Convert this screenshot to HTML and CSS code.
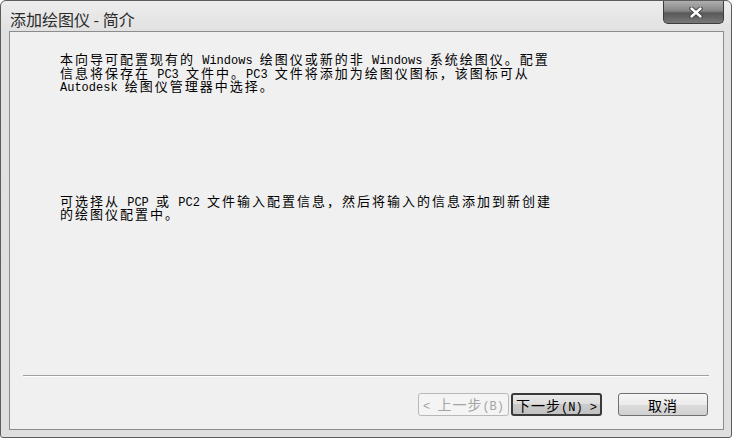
FILE: index.html
```html
<!DOCTYPE html>
<html lang="zh-CN">
<head>
    <meta charset="UTF-8">
    <title>添加绘图仪 - 简介</title>
    <link rel="stylesheet" href="styles.css">
</head>
<body>
    <div class="window">
        <div class="titlebar">
            <span class="title">添加绘图仪 - 简介</span>
            <button class="close" aria-label="关闭">
                <svg width="14" height="11" viewBox="0 0 14 11">
                    <path d="M2.5 1.5 L11.5 9.5 M11.5 1.5 L2.5 9.5" stroke="#3a3a3a" stroke-width="4.2" stroke-linecap="round"/>
                    <path d="M2.5 1.5 L11.5 9.5 M11.5 1.5 L2.5 9.5" stroke="#fff" stroke-width="2.4" stroke-linecap="round"/>
                </svg>
            </button>
        </div>

        <div class="client">
            <div class="content">
                <p>本向导可配置现有的<span class="en"> Windows </span>绘图仪或新的非<span class="en"> Windows </span>系统绘图仪。配置<br>信息将保存在<span class="en"> PC3 </span>文件中。<span class="en">PC3 </span>文件将添加为绘图仪图标，该图标可从<br><span class="en">Autodesk </span>绘图仪管理器中选择。</p>
                <p>可选择从<span class="en"> PCP </span>或<span class="en"> PC2 </span>文件输入配置信息，然后将输入的信息添加到新创建<br>的绘图仪配置中。</p>
            </div>
            <div class="sep"></div>
            <div class="actions">
                <button class="btn" disabled><span class="en">&lt; </span>上一步<span class="en">(B)</span></button>
                <button class="btn default">下一步<span class="en">(N) &gt;</span></button>
                <button class="btn cancel">取消</button>
            </div>
        </div>
    </div>
</body>
</html>
```

FILE: styles.css
```css
body {
    margin: 0;
    background: #fff;
    font-family: "Noto Sans CJK SC", sans-serif;
}
.window {
    width: 732px;
    height: 438px;
    box-sizing: border-box;
    border: 1px solid #5c5c5c;
    border-radius: 6px 6px 3px 3px;
    background: linear-gradient(#ededed, #e1e1e1 30px, #dfdfdf);
    padding: 0 7px 7px 8px;
    display: flex;
    flex-direction: column;
}
.titlebar {
    height: 30px;
    display: flex;
    align-items: flex-start;
}
.title {
    font-size: 16px;
    line-height: 18px;
    color: #2a2a2a;
    padding: 9px 0 0 1px;
}
.close {
    margin-left: auto;
    width: 61px;
    height: 23px;
    box-sizing: border-box;
    border: 1px solid #3c3c3c;
    border-top: none;
    border-radius: 0 0 5px 5px;
    background: linear-gradient(#b0b0b0, #858585 45%, #585858 55%, #787878);
    display: flex;
    align-items: center;
    justify-content: center;
    padding: 0 0 0 5px;
}
.client {
    flex: 1;
    border: 1px solid #8c8c8c;
    background: #f0f0f0;
    display: flex;
    flex-direction: column;
}
.content {
    flex: 1;
    padding: 20px 0 0 50px;
    font-size: 13px;
    line-height: 13.5px;
    letter-spacing: 2px;
    color: #000;
}
.content p {
    margin: 0;
    white-space: nowrap;
}
.content p + p {
    margin-top: 101px;
}
.en {
    font-family: "Liberation Mono", monospace;
    font-size: 12px;
    letter-spacing: 0;
}
.content .en {
    line-height: 0;
}
.sep {
    margin: 0 14px 0 13px;
    border-top: 1px solid #a0a0a0;
    border-bottom: 1px solid #fff;
}
.actions {
    display: flex;
    justify-content: flex-end;
    gap: 2px;
    padding: 16px 15px 13px;
}
.btn {
    width: 91px;
    height: 23px;
    box-sizing: border-box;
    padding: 0;
    font-family: "Noto Sans CJK SC", sans-serif;
    font-size: 14px;
    line-height: 20px;
    letter-spacing: 1px;
    color: #000;
    border: 1px solid #707070;
    border-radius: 3px;
    background: linear-gradient(#f6f6f6, #ebebeb 50%, #dddddd 50%, #d0d0d0);
}
.btn .en {
    font-size: 12px;
}
.btn:disabled {
    border-color: #b8b8b8;
    background: #f4f4f4;
    color: #a4a4a4;
}
.btn.default {
    border: 2px solid #3a3a3a;
    background: linear-gradient(#eaeaea, #dcdcdc 50%, #cbcbcb 50%, #c2c2c2);
}
.btn.cancel {
    width: 90px;
    margin-left: 14px;
}
```
